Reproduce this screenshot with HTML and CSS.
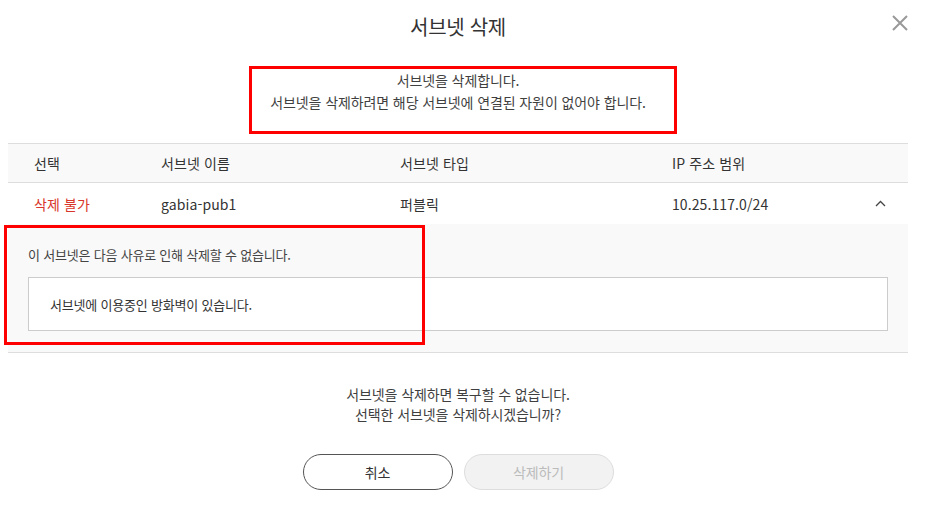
FILE: index.html
```html
<!DOCTYPE html>
<html lang="ko">
<head>
<meta charset="utf-8">
<title>서브넷 삭제</title>
<link rel="stylesheet" href="styles.css">
</head>
<body>
<div class="modal">
  <div class="modal-head">
    <h1 class="modal-title">서브넷 삭제</h1>
    <button class="close-btn" aria-label="닫기">
      <svg width="16" height="16" viewBox="0 0 16 16"><path d="M1 1L15 15M15 1L1 15" stroke="#999" stroke-width="2" fill="none"/></svg>
    </button>
  </div>
  <div class="desc">
    <p>서브넷을 삭제합니다.</p>
    <p>서브넷을 삭제하려면 해당 서브넷에 연결된 자원이 없어야 합니다.</p>
  </div>

  <div class="table">
    <div class="row head">
      <span>선택</span>
      <span>서브넷 이름</span>
      <span>서브넷 타입</span>
      <span>IP 주소 범위</span>
      <span></span>
    </div>
    <div class="row body">
      <span class="danger">삭제 불가</span>
      <span>gabia-pub1</span>
      <span>퍼블릭</span>
      <span>10.25.117.0/24</span>
      <span class="chev"><svg width="11" height="7" viewBox="0 0 11 7"><path d="M1 6L5.5 1.5L10 6" stroke="#444" stroke-width="1.3" fill="none"/></svg></span>
    </div>
    <div class="detail">
      <p class="detail-lead">이 서브넷은 다음 사유로 인해 삭제할 수 없습니다.</p>
      <div class="reason">서브넷에 이용중인 방화벽이 있습니다.</div>
    </div>
  </div>

  <div class="confirm">
    <p>서브넷을 삭제하면 복구할 수 없습니다.</p>
    <p>선택한 서브넷을 삭제하시겠습니까?</p>
  </div>

  <div class="actions">
    <button class="btn btn-cancel">취소</button>
    <button class="btn btn-delete" disabled>삭제하기</button>
  </div>

  <div class="mark mark-desc"></div>
  <div class="mark mark-detail"></div>
</div>
</body>
</html>
```

FILE: styles.css
```css
* { box-sizing: border-box; }
body {
  margin: 0;
  background: #fff;
  font-family: "Noto Sans CJK KR", "Noto Sans", sans-serif;
  color: #333;
}
p { margin: 0; }
.modal {
  position: relative;
  width: 900px;
  margin-left: 8px;
  font-size: 14px;
  letter-spacing: -0.1px;
}
.modal-head {
  position: relative;
  padding-top: 13px;
  height: 42px;
  text-align: center;
}
.modal-title {
  margin: 0;
  font-size: 20px;
  line-height: 28px;
  font-weight: 400;
  letter-spacing: -0.3px;
  color: #333;
}
.close-btn {
  position: absolute;
  right: 0;
  top: 15px;
  width: 16px;
  height: 16px;
  padding: 0;
  border: 0;
  background: none;
  display: flex;
}
.desc {
  margin-top: 27px;
  margin-bottom: 30px;
  text-align: center;
  line-height: 22px;
  color: #3f3f3f;
}
.table {
  border-top: 1px solid #ddd;
}
.row {
  display: grid;
  grid-template-columns: 127px 239px 272px 1fr 33px;
  padding-left: 26px;
  align-items: center;
  letter-spacing: 0.1px;
}
.row.head {
  height: 39px;
  background: #f9f9f9;
  border-bottom: 1px solid #ddd;
}
.row.body {
  height: 41px;
}
.danger { color: #d9362b; }
.chev { display: flex; align-items: center; }
.detail {
  background: #f9f9f9;
  border-bottom: 1px solid #ddd;
  padding: 21px 20px 21px;
  font-size: 13px;
  letter-spacing: -0.2px;
}
.detail-lead {
  line-height: 20px;
  color: #444;
}
.reason {
  margin-top: 12px;
  height: 54px;
  background: #fff;
  border: 1px solid #ccc;
  padding-left: 21px;
  display: flex;
  align-items: center;
  color: #333;
}
.confirm {
  margin-top: 31px;
  text-align: center;
  line-height: 20px;
  color: #3f3f3f;
}
.actions {
  margin-top: 30px;
  display: flex;
  justify-content: center;
  gap: 11px;
}
.btn {
  width: 150px;
  height: 36px;
  border-radius: 18px;
  font-family: inherit;
  font-size: 14px;
  letter-spacing: -0.1px;
}
.btn-cancel {
  background: #fff;
  border: 1px solid #555;
  color: #333;
}
.btn-delete {
  background: #f2f2f2;
  border: 1px solid #ddd;
  color: #bbb;
}
.mark {
  position: absolute;
  border: 3px solid #ff0000;
  pointer-events: none;
}
.mark-desc {
  left: 241px;
  top: 66px;
  width: 428px;
  height: 68px;
}
.mark-detail {
  left: -4px;
  top: 225px;
  width: 421px;
  height: 120px;
}
```
